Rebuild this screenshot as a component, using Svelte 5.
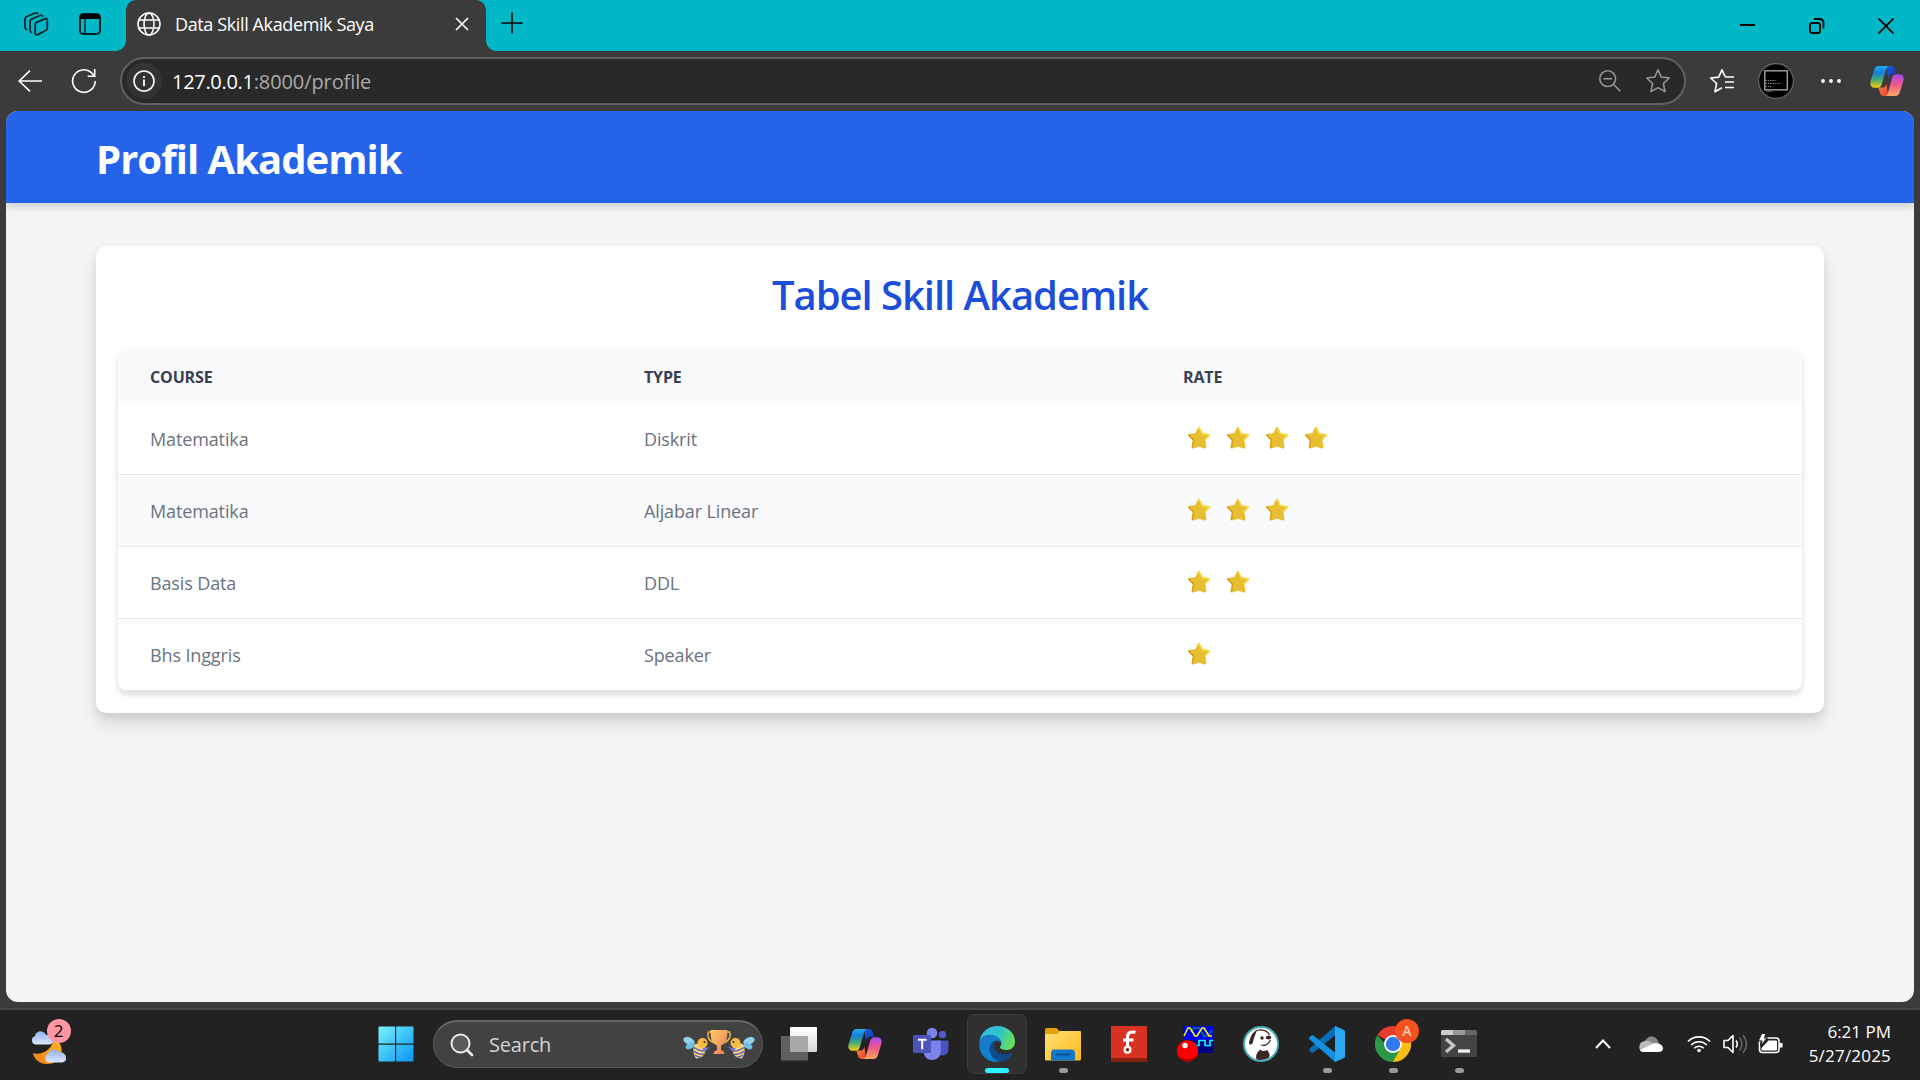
<script>
  const rows = [
    { course: 'Matematika', type: 'Diskrit', rate: 4 },
    { course: 'Matematika', type: 'Aljabar Linear', rate: 3 },
    { course: 'Basis Data', type: 'DDL', rate: 2 },
    { course: 'Bhs Inggris', type: 'Speaker', rate: 1 }
  ];
</script>

{#snippet copilot()}
  <svg width="34" height="32" viewBox="0 0 34 32">
    <defs>
      <linearGradient id="cpA" x1="0" y1="0" x2="0" y2="1"><stop offset="0" stop-color="#25a9f0" /><stop offset=".3" stop-color="#1381dc" /><stop offset=".62" stop-color="#45a878" /><stop offset="1" stop-color="#f2d410" /></linearGradient>
      <linearGradient id="cpB" x1="0" y1="0" x2="0" y2="1"><stop offset="0" stop-color="#a44af0" /><stop offset=".45" stop-color="#ee5490" /><stop offset="1" stop-color="#fda75c" /></linearGradient>
      <linearGradient id="cpC" x1="0" y1="0" x2="1" y2="1"><stop offset="0" stop-color="#1b5fd8" /><stop offset="1" stop-color="#1430b0" /></linearGradient>
      <linearGradient id="cpD" x1="0" y1="0" x2="1" y2="1"><stop offset="0" stop-color="#fb8a3c" /><stop offset="1" stop-color="#ee4436" /></linearGradient>
    </defs>
    <path d="M16 1h5c2 0 3.200 1 3.700 2.700l1.300 4.500c.3.600.8.800 1.400.8h-5c-3 0-3.700 2-4.300 4z" fill="url(#cpC)" />
    <path d="M18 31h-4c-2 0-3.400-1-3.900-2.700l-1.300-4.500C8.500 23 8 22.500 7 22.500h5.500c2.500 0 3.300-2 4-4z" fill="url(#cpD)" />
    <path d="M8.800 1H19c-1.800.5-2.500 2-3 3.600l-4.200 14.700c-.7 2.300-1.800 3.500-4.300 3.500H4.600C1 22.800-.3 20 .6 16.500L4 5C4.800 2.400 6.300 1 8.800 1z" fill="url(#cpA)" />
    <path d="M25.200 31H15c1.800-.5 2.500-2 3-3.600l4.200-14.700c.7-2.300 1.800-3.500 4.300-3.500h2.900c3.600 0 4.900 2.800 4 6.300L30 27c-.8 2.600-2.300 4-4.800 4z" fill="url(#cpB)" />
  </svg>
{/snippet}

{#snippet bee()}
  <ellipse cx="6" cy="12" rx="6" ry="3.600" transform="rotate(25 6 12)" fill="#8fd0ea" />
  <ellipse cx="7" cy="17" rx="4.600" ry="2.800" transform="rotate(-25 7 17)" fill="#6fbfe2" />
  <path d="M12 15c5-1 10 1 10.500 5 0 5-3 9.500-9.500 9.500-3-4.500-3.500-10-1-14.500z" fill="#f6cf80" />
  <path d="M11 18.500q6 4 11 3.500M11 22.300q5 3.700 10 3M12 26q3 2.300 6 2" stroke="#5c62b8" stroke-width="1.500" fill="none" />
  <path d="M19 19.500l8-1.500-5 4.500z" fill="#7276d6" />
  <circle cx="19.500" cy="14" r="5" fill="#f7bb42" />
  <path d="M18 9q0-3-2-4M21 9q1-3 2.500-4" stroke="#3d4050" fill="none" />
  <circle cx="21.500" cy="13" r="1" fill="#222" />
{/snippet}

<div class="screen">
  <div class="tabs">
    <svg class="i1" width="25" height="26" viewBox="0 0 25 26" fill="none" stroke="#08242a" stroke-width="1.800" stroke-linejoin="round" stroke-linecap="round">
      <path d="M12.500 11.300l8.800-3.700q2-.6 2 1.400v8.300q0 1.400-1.300 2l-8.200 4.300q-2.600 1-2.600-1.400V13.700q0-1.800 1.300-2.400z" />
      <path d="M7.500 21.500q-1.500-.7-1.500-2.200v-9q0-1.500 1.500-2.200L16 4.500q1.700-.6 2.700.5" />
      <path d="M2.500 18.500Q1 17.800 1 16.300V8q0-1.500 1.500-2.200L11 2q1.700-.6 2.700.5" />
    </svg>
    <svg class="i2" width="22" height="22" viewBox="0 0 22 22"><rect x="1" y="1" width="20" height="20" rx="3.500" fill="none" stroke="#08242a" stroke-width="2" /><path d="M1 6V4q0-3 3-3h14q3 0 3 3v2z" fill="#000" /><path d="M6 6v15" stroke="#08242a" stroke-width="1.500" /></svg>
    <div class="tab">
      <svg width="24" height="24" viewBox="0 0 24 24" fill="none" stroke="#fff" stroke-width="1.500"><circle cx="12" cy="12" r="11" /><ellipse cx="12" cy="12" rx="5" ry="11" /><path d="M2 8h20M2 16h20" /></svg>
      <span class="tabtitle">Data Skill Akademik Saya</span>
      <svg class="x" width="14" height="14" viewBox="0 0 14 14" stroke="#fff" stroke-width="1.600"><path d="M1 1l12 12M13 1L1 13" /></svg>
    </div>
    <svg class="plus" width="22" height="22" viewBox="0 0 22 22" stroke="#000" stroke-width="1.500"><path d="M11 .500v21M.500 11h21" /></svg>
    <div class="wins">
      <svg width="16" height="16" viewBox="0 0 16 16" stroke="#000" stroke-width="2"><path d="M0 7h15" /></svg>
      <svg width="16" height="16" viewBox="0 0 16 16" fill="none" stroke="#000" stroke-width="1.800"><rect x="1" y="5" width="10" height="10" rx="2" /><path d="M5 1h5.500q4 0 4 4v5.500" /></svg>
      <svg width="16" height="16" viewBox="0 0 16 16" stroke="#000" stroke-width="1.800"><path d="M.500.500l15 15M15.500.500l-15 15" /></svg>
    </div>
  </div>

  <div class="toolbar">
    <svg class="back" width="24" height="22" viewBox="0 0 24 22" fill="none" stroke="#fff" stroke-width="1.600"><path d="M12 .700L1.200 11 12 21.300M1.200 11H24" /></svg>
    <svg class="reload" width="26" height="26" viewBox="0 0 26 26" fill="none" stroke="#fff" stroke-width="1.600"><path d="M24.200 13A11.300 11.300 0 1 1 20.500 4.700L23.500 8M23.700 1v7.200h-7" /></svg>
    <div class="address">
      <div class="info"><svg width="22" height="22" viewBox="0 0 22 22" fill="none" stroke="#fff" stroke-width="1.600"><circle cx="11" cy="11" r="10" /><path d="M11 9.500V16M11 6v2" stroke-width="1.800" /></svg></div>
      <div class="url"><span class="host">127.0.0.1</span><span class="path">:8000/profile</span></div>
      <svg class="mag" width="22" height="22" viewBox="0 0 22 22" fill="none" stroke="#999" stroke-width="1.500"><circle cx="8.700" cy="8.700" r="7.900" /><path d="M4.500 8.700h8.500M14.300 14.300l7 7" /></svg>
      <svg width="26" height="26" viewBox="0 0 26 26" fill="none" stroke="#999" stroke-width="1.500" stroke-linejoin="round"><path d="M13 1.800l3.300 7.300 8 .9-5.900 5.500 1.600 8.200-7-4-7 4 1.600-8.200L1.700 10l8-.9z" /></svg>
    </div>
    <svg class="fav" width="26" height="26" viewBox="0 0 26 26" fill="none" stroke="#fff" stroke-width="1.600" stroke-linejoin="round"><path d="M16 8.300L13 1.800 9.700 9.100l-8 .9 5.900 5.500L6 23.700l7-4M16 9h9M16 14h9M16 19.500h9" /></svg>
    <svg class="avatar" width="36" height="36" viewBox="0 0 36 36"><circle cx="18" cy="18" r="17.400" fill="#000" stroke="#666" stroke-width="1.200" /><rect x="6.800" y="7.800" width="22.500" height="19" fill="none" stroke="#999" stroke-width="1.500" /><path d="M7.500 17.500h10M7.500 20.500h15M7.500 23.500h6M8 28.500h7" stroke="#888" stroke-width="1.100" stroke-dasharray="1.300 1" /></svg>
    <svg class="dots" width="20" height="4" viewBox="0 0 20 4" fill="#fff"><circle cx="2" cy="2" r="1.900" /><circle cx="10" cy="2" r="1.900" /><circle cx="18" cy="2" r="1.900" /></svg>
    {@render copilot()}
  </div>

  <div class="page">
    <header><h1>Profil Akademik</h1></header>
    <main>
      <h2>Tabel Skill Akademik</h2>
      <div class="table">
        <div class="row head"><span>COURSE</span><span>TYPE</span><span>RATE</span></div>
        {#each rows as r}
          <div class="row"><span>{r.course}</span><span>{r.type}</span>
            <div class="stars">
              {#each Array(r.rate) as _}
                <svg width="24" height="24" viewBox="0 0 24 24"><path d="M12 1.900l3.200 6.200 7 1-4.800 4.900 1.100 7.500c-2.500.3-4-1.700-6.500-1.700s-4 2-6.500 1.700L6.600 14 1.800 9.100l7-1z" fill="#e9bf32" stroke="#e9bf32" stroke-width="2" stroke-linejoin="round" /><path d="M1.600 8.800l5 5.200-1.100 8" fill="none" stroke="#d49b22" stroke-width="1.300" stroke-linejoin="round" /><path d="M12 1.500l3.400 6.300 7.200 1.100-4.900 5" fill="none" stroke="#fbe04a" stroke-width="1.200" stroke-linejoin="round" /></svg>
              {/each}
            </div>
          </div>
        {/each}
      </div>
    </main>
  </div>

  <div class="taskbar">
    <div class="weather">
      <svg width="44" height="42" viewBox="0 0 44 42">
        <defs><linearGradient id="moon" x1="0" y1="1" x2="1" y2="0"><stop offset="0" stop-color="#f47a17" /><stop offset="1" stop-color="#fbbc27" /></linearGradient><linearGradient id="cloud" x1="0" y1="0" x2="0" y2="1"><stop offset="0" stop-color="#8fb0f0" /><stop offset="1" stop-color="#dbe8fb" /></linearGradient></defs>
        <path d="M3 30c9 3 20-4 21-15 12 6 10 26-7 26C9 41 4 36 3 30z" fill="url(#moon)" />
        <path d="M5 21.500a4.500 4.500 0 0 1 0-8.500c1-6 9-6 11-1 4-1 8 2 7 6q0 3.500-4 3.500z" fill="url(#cloud)" />
        <path d="M19 39.500a4.500 4.500 0 0 1-1-8.600c1-5 9-6 11-1.500 4-1 7 2 7 5.500s-2 4.600-5 4.600z" fill="url(#cloud)" />
      </svg>
      <span class="badge">2</span>
    </div>
    <div class="apps">
      <svg class="start" width="36" height="36" viewBox="0 0 36 36"><defs><linearGradient id="win" x1="0" y1="0" x2="36" y2="36" gradientUnits="userSpaceOnUse"><stop offset="0" stop-color="#7cf4fd" /><stop offset=".5" stop-color="#3cc4fa" /><stop offset="1" stop-color="#0a93fb" /></linearGradient></defs><path d="M.500 1.500q0-1 1-1H17v17H.500zM18.200.500H34.500q1 0 1 1v16H18.200zM.500 18.700H17v16.800H1.500q-1 0-1-1zM18.200 18.700h17.300v15.800q0 1-1 1H18.200z" fill="url(#win)" /></svg>
      <div class="search">
        <svg width="24" height="24" viewBox="0 0 24 24" fill="none" stroke="#e8eaee" stroke-width="2"><circle cx="10.500" cy="10.500" r="9" fill="#5a5a5a" /><path d="M17 17l5 5" stroke-width="2.800" stroke-linecap="round" /></svg>
        <span>Search</span>
        <svg class="bees" width="72" height="32" viewBox="0 0 72 32">
          <defs><linearGradient id="cup" x1="0" y1="0" x2="1" y2="1"><stop offset="0" stop-color="#ffcc68" /><stop offset="1" stop-color="#ee7a58" /></linearGradient></defs>
          <g>{@render bee()}</g>
          <g transform="translate(72 0) scale(-1 1)">{@render bee()}</g>
          <path d="M28 3h-2.500c-2 5 1 10 7 11M44 3h2.500c2 5-1 10-7 11" fill="none" stroke="#e9b440" stroke-width="1.500" />
          <path d="M27.500 1h17c0 9-1 13-6.500 15.500V21q3.500 1 3.500 4h-11q0-3 3.500-4v-4.500C28.500 14 27.500 10 27.500 1z" fill="url(#cup)" />
        </svg>
      </div>
      <div class="tile"><svg width="36" height="36" viewBox="0 0 36 36"><defs><linearGradient id="tv" x1="0" y1="0" x2="0" y2="1"><stop offset="0" stop-color="#fff" /><stop offset="1" stop-color="#d8d8d8" /></linearGradient></defs><rect x="0" y="10" width="27" height="24.500" rx="1" fill="#606060" /><rect x="9" y="1" width="27" height="25" rx="1" fill="url(#tv)" /><path d="M9 10h18v16H9z" fill="#a9a9a9" /></svg></div>
      <div class="tile">{@render copilot()}</div>
      <div class="tile"><svg width="36" height="36" viewBox="0 0 36 36"><circle cx="29.500" cy="8.500" r="3.700" fill="#5059c9" /><path d="M24 14.500h10.500q1 0 1 1V23c0 4-2.500 6.500-6 6.500s-6-2-6-6z" fill="#4b53bc" /><circle cx="19" cy="7" r="5.300" fill="#7b83eb" /><path d="M11 14.500h15.500q1.300 0 1.300 1.300V25c0 5.500-3.500 9-8.800 9s-8.500-4-8.500-9z" fill="#7b83eb" /><rect x="0" y="9" width="18" height="18" rx="1.500" fill="#4b53bc" /><path d="M5 13.700h8.500M9.200 13.700v9.500" stroke="#fff" stroke-width="2" /></svg></div>
      <div class="tile active"><svg width="36" height="36" viewBox="0 0 36 36"><defs><linearGradient id="edA" x1="0" y1=".3" x2="1" y2=".6"><stop offset="0" stop-color="#35b5ec" /><stop offset=".5" stop-color="#2fc5c8" /><stop offset="1" stop-color="#6be352" /></linearGradient><linearGradient id="edB" x1="0" y1="0" x2=".5" y2="1"><stop offset="0" stop-color="#1b78c8" /><stop offset="1" stop-color="#0a83d8" /></linearGradient></defs>
        <path d="M.400 16C1.500 6.500 9 0 18.200 0 28.500 0 36 7 36 15.500c0 5-3.500 8.500-8.500 8.500-3.500 0-6.500-1.200-6.500-2.700 0-1 1.300-1.500 1.300-4C22.300 13 17 9 11 9 5.500 9 1.500 12 .400 16z" fill="url(#edA)" />
        <path d="M.200 18.500C.200 12.500 5 9 11 9c6.500 0 11.300 4 11.300 8.300C21 14 14 13.500 11.500 19c-2.500 6 2 14 8.500 16.800-1 .2-2 .2-3 .2C7 35.500.200 28 .200 18.500z" fill="url(#edB)" />
        <path d="M20 35.800C12.500 33 8.500 25 11.500 19c1.500-3.300 4.500-4.300 7-4.200-1.500.8-3.500 3-3.500 5.500 0 5 5 8 11 8 3 0 5-.7 6.300-1.300.7-.2 1 .4.700 1C30.500 32.500 25.500 35.800 20 35.800z" fill="#114a8b" /></svg><i class="on"></i></div>
      <div class="tile"><svg width="36" height="36" viewBox="0 0 36 36"><defs><linearGradient id="fo" x1="0" y1="0" x2="1" y2="1"><stop offset="0" stop-color="#ffdf78" /><stop offset="1" stop-color="#fdb912" /></linearGradient></defs><path d="M0 3.500Q0 2 1.500 2h10l4 4v5H0z" fill="#e2a10a" /><path d="M0 8h12l3-3h20q1 0 1 1v27q0 1.500-1.500 1.500h-33Q0 34.500 0 33z" fill="url(#fo)" /><path d="M6 34.500V27q0-3.500 3.500-3.500h17Q30 23.500 30 27v7.500z" fill="#1378c8" /><path d="M11 28.500h14" stroke="#0a4c88" stroke-width="1.600" /></svg><i></i></div>
      <div class="tile"><svg width="36" height="36" viewBox="0 0 36 36"><path d="M0 0h36v36H0z" fill="#d83222" /><path d="M0 32h36v4H0z" fill="#86200f" /><path d="M24.500 6.200c-5-1-8 .5-8 5V21M12 14h10.500" fill="none" stroke="#fff" stroke-width="3" /><circle cx="16.500" cy="23.800" r="2.900" fill="#86200f" stroke="#fff" stroke-width="2.200" /></svg></div>
      <div class="tile"><svg width="36" height="36" viewBox="0 0 36 36"><path d="M6 0h30v14H6z" fill="#0000f0" /><path d="M10 14h26v13H10z" fill="#000084" /><path d="M14 6l3-4h5l5 8h4l4-6" fill="none" stroke="#067f7f" stroke-width="1.500" /><path d="M7 10l4-8h2l5 8h2l5-8h2l5 8h3" fill="none" stroke="#ff0" stroke-width="1.500" /><path d="M18 19.500h4v-5h6v5h5v-5h3" fill="none" stroke="#0ff" stroke-width="1.600" /><circle cx="10.500" cy="25" r="10.700" fill="#f00" /><path d="M1.500 30a10.500 10.500 0 0 0 18 0q-9 7-18 0z" fill="#900" /><circle cx="8" cy="19.500" r="2.700" fill="#fff" /></svg></div>
      <div class="tile"><svg width="36" height="36" viewBox="0 0 36 36"><circle cx="18" cy="18" r="17" fill="#fff" stroke="#4aabb3" stroke-width="2" /><path d="M13.500 33.500c-1-4 0-7 4-10 1.500 2 4 2 6.500.5 2 2 3.500 5.500 2 7.500-3.500 2.300-8.500 3-12.500 2z" fill="#382923" /><path d="M13.500 4.500c-5 2-6.500 8-7.500 12 0 3 3.500 2.500 4-.5.500-4 3-8 3.500-11.500z" fill="#382923" /><path d="M12 5.500c6-3.500 13-.5 14.500 3.500M18 19c3 1 7 0 9.500-5" fill="none" stroke="#382923" stroke-width="1.200" /><circle cx="19" cy="12" r="1.700" fill="#382923" /><ellipse cx="25.500" cy="11.500" rx="2.700" ry="2" fill="#382923" /></svg></div>
      <div class="tile"><svg width="36" height="36" viewBox="0 0 36 36"><path d="M26 0l9 4q1 .6 1 1.700v24.600q0 1.100-1 1.700l-9 4z" fill="#29a9f2" /><path d="M26 0v9.500L4.500 26.500q-1 .7-2 0L.500 24.700q-1-1 0-2z" fill="#0a6cb5" /><path d="M26 36v-9.500L4.500 9.500q-1-.7-2 0L.500 11.300q-1 1 0 2z" fill="#1490df" /></svg><i></i></div>
      <div class="tile"><svg width="36" height="36" viewBox="0 0 36 36"><path d="M18 18L2.400 9A18 18 0 0 1 33.600 9z" fill="#e33b2e" /><path d="M18 18L33.600 9A18 18 0 0 1 18 36z" fill="#fdbf12" /><path d="M18 18h-7.800L2.400 9A18 18 0 0 0 18 36l7.800-13.500z" fill="#2a9844" /><path d="M18 9h15.600L25.800 22.500 18 36q9-6 7.800-13.500z" fill="#fdbf12" /><circle cx="18" cy="18" r="9" fill="#fff" /><circle cx="18" cy="18" r="7.200" fill="#3079ee" /></svg><b>A</b><i></i></div>
      <div class="tile"><svg width="36" height="36" viewBox="0 0 36 36"><path d="M0 7h36v22.500q0 1.500-1.500 1.500h-33Q0 31 0 29.500z" fill="#444" /><path d="M0 9V5.500Q0 4 1.500 4H12v5z" fill="#ccc" /><path d="M12 4h12v5H12z" fill="#999" /><path d="M24 4h10.500Q36 4 36 5.500V9H24z" fill="#666" /><path d="M5 13l7.500 6.500L5 26" fill="none" stroke="#c4c4c4" stroke-width="3.400" /><path d="M17 23.300h12v3.400H17z" fill="#eee" /></svg><i></i></div>
    </div>
    <div class="tray">
      <svg width="16" height="10" viewBox="0 0 16 10" fill="none" stroke="#fff" stroke-width="2"><path d="M1 9l7-7.500L15 9" /></svg>
      <svg class="cl" width="24" height="17" viewBox="0 0 24 17"><path d="M5 8C7-2 18-2 20 8l-3 5z" fill="#888" /><path d="M4 16C-1 15-1 7 4 5.500c4-2 8 0 10 2L20 13l-4 3z" fill="#bbb" /><path d="M4 16c-1.500-.3-2.500-1-3-2l13-6.300c4-1.500 10 .5 10 4.600 0 2.500-2 3.700-4 3.700z" fill="#fff" /></svg>
      <svg class="wf" width="24" height="18" viewBox="0 0 24 18" fill="none" stroke="#fff" stroke-width="1.600"><path d="M1 6.500a15.500 15.500 0 0 1 22 0M4.200 10a11 11 0 0 1 15.600 0M7.300 13.200a6.600 6.600 0 0 1 9.400 0" /><circle cx="12" cy="15.500" r="1.800" fill="#fff" stroke="none" /></svg>
      <svg class="sp" width="25" height="20" viewBox="0 0 25 20" fill="none" stroke="#fff" stroke-width="1.600" stroke-linejoin="round"><path d="M1 6.500h4l5-5v17l-5-5H1z" /><path d="M13 6.500q2.500 3.500 0 7" /><path d="M16.500 3.500q5 6.500 0 13M20 1q7 9 0 18" stroke="#666" /></svg>
      <svg class="bt" width="25" height="20" viewBox="0 0 25 20"><rect x="1.500" y="4" width="19.500" height="14.500" rx="3" fill="none" stroke="#fff" stroke-width="1.600" /><path d="M10.500 6.500h7.500q1 0 1 1v8q0 1-1 1H4.500q-1 0-1-1v-1.500z" fill="#fff" /><path d="M21.500 9H24.500v4.500h-3z" fill="#fff" /><path d="M3.500-.5H8L6.500 4H9.200L2.500 12.500l1.300-5.500H.2z" fill="#fff" stroke="#222" stroke-width="1.200" /></svg>
      <div class="clock"><span>6:21 PM</span><span class="date">5/27/2025</span></div>
    </div>
  </div>
</div>

<style>
  :global(body) { margin: 0; background: #3b3b3b; }
  :global(*) { box-sizing: border-box; }
  svg { display: block; flex: none; }
  .screen { width: 1920px; height: 1080px; overflow: hidden; display: flex; flex-direction: column; font-family: 'Open Sans', 'Noto Sans', sans-serif; background: #3b3b3b; white-space: nowrap; }
  .tabs { height: 51px; background: #02b8c6; display: flex; align-items: flex-start; padding: 0 26px 0 24px; flex: none; }
  .i1 { margin: 11px 30px 0 0; }
  .i2 { margin: 13px 25px 0 0; }
  .tab { width: 360px; height: 51px; background: #3b3b3b; border-radius: 10px 10px 0 0; display: flex; align-items: center; padding: 0 17px 3px 11px; color: #fff; font-size: 18px; position: relative; }
  .tab::before, .tab::after { content: ''; position: absolute; bottom: 0; width: 10px; height: 10px; }
  .tab::before { left: -10px; background: radial-gradient(circle at 0 0, #02b8c6 9.500px, #3b3b3b 10px); }
  .tab::after { right: -10px; background: radial-gradient(circle at 100% 0, #02b8c6 9.500px, #3b3b3b 10px); }
  .tabtitle { margin-left: 14px; flex: 1; letter-spacing: -.38px; }
  .plus { margin: 12px 0 0 15px; }
  .wins { margin: 18px 0 0 auto; display: flex; gap: 53px; }
  .toolbar { height: 60px; flex: none; display: flex; align-items: center; padding-left: 18px; }
  .reload { margin-left: 29px; }
  .address { margin-left: 23px; width: 1566px; height: 48px; border: 2px solid #606060; border-radius: 24px; background: #292929; display: flex; align-items: center; padding: 0 13px 0 4px; }
  .info { width: 36px; height: 36px; border-radius: 50%; background: #333; display: grid; place-items: center; }
  .url { margin-left: 10px; font-size: 20px; flex: 1; }
  .host { color: #fff; letter-spacing: -.3px; }
  .path { color: #a9a9a9; letter-spacing: -.1px; }
  .mag { margin-right: 24px; }
  .fav { margin-left: 23px; }
  .avatar { margin-left: 23px; }
  .dots { margin: 0 29px 0 27px; }
  .page { margin: 0 6px; height: 891px; flex: none; border-radius: 12px; overflow: hidden; background: #f3f4f6; }
  header { height: 92px; background: #2563eb; padding: 0 90px; box-shadow: 0 4px 8px rgba(0,0,0,.16); display: flex; align-items: center; }
  h1, h2 { margin: 0; font-size: 40px; }
  h1 { color: #fff; font-weight: 700; line-height: 50px; padding-top: 4px; letter-spacing: -.97px; }
  main { margin: 43px 90px 0; height: 467px; background: #fff; border-radius: 10px; padding: 22px; box-shadow: 0 12px 18px rgba(0,0,0,.1), 0 4px 8px rgba(0,0,0,.08); }
  h2 { color: #1d4ed8; font-weight: 600; text-align: center; line-height: 54px; height: 81px; letter-spacing: -1.030px; }
  .table { border-radius: 10px; overflow: hidden; box-shadow: 0 4px 7px rgba(0,0,0,.14); }
  .row { display: grid; grid-template-columns: 494px 539px 1fr; height: 72px; align-items: center; padding-left: 32px; border-bottom: 1px solid #e5e7eb; font-size: 18px; letter-spacing: -.13px; color: #6b7280; justify-items: start; }
  .row:nth-child(3) { background: #f9fafb; }
  .row.head { height: 54px; padding-top: 1px; background: #f9fafb; border: 0; font-size: 16px; font-weight: 700; letter-spacing: -.15px; color: #374151; }
  .stars { display: flex; gap: 15.200px; padding: 0 0 2px 3.500px; }
  .taskbar { margin-top: 6px; padding-bottom: 2px; border-top: 2px solid #464646; height: 72px; flex: none; background: #222; display: flex; align-items: center; color: #fff; }
  .weather { width: 378px; padding-left: 30px; position: relative; }
  .badge { position: absolute; left: 46.500px; top: -4.500px; width: 24px; height: 24px; border-radius: 50%; background: #ff97a3; color: #000; font-size: 17px; line-height: 24px; text-align: center; }
  .apps { display: flex; align-items: center; }
  .search { width: 330px; height: 48px; margin: 0 3px 0 19px; border-radius: 24px; background: #424242; border: 1px solid #555; border-top: 2px solid #666; display: flex; align-items: center; padding: 0 7px 0 16px; font-size: 20px; color: #d4d4d4; }
  .search span { margin-left: 15px; flex: 1; letter-spacing: -.2px; }
  .tile { width: 60px; height: 60px; margin: 0 3px; border-radius: 7px; display: grid; place-items: center; padding-bottom: 1px; position: relative; }
  .active { background: #303030; border: 1px solid #3c3c3c; }
  .tile i { position: absolute; left: calc(50% - 4.500px); bottom: 1px; width: 9px; height: 5px; border-radius: 3px; background: #999; }
  .tile i.on { width: 24px; left: 17px; bottom: 0; background: #2bf0fd; }
  .tile b { position: absolute; right: 4px; top: 5px; width: 24px; height: 24px; border-radius: 50%; background: #f4511e; color: #ffc8b8; font-size: 14px; font-weight: 600; line-height: 24px; text-align: center; }
  .tray { margin-left: auto; padding-right: 29px; display: flex; align-items: center; }
  .cl { margin-left: 28px; }
  .wf { margin-left: 24px; }
  .sp { margin-left: 12px; }
  .bt { margin-left: 10px; }
  .clock { width: 108px; text-align: right; display: flex; flex-direction: column; font-size: 17px; line-height: 24px; align-items: flex-end; }
  .date { letter-spacing: .2px; }
</style>
